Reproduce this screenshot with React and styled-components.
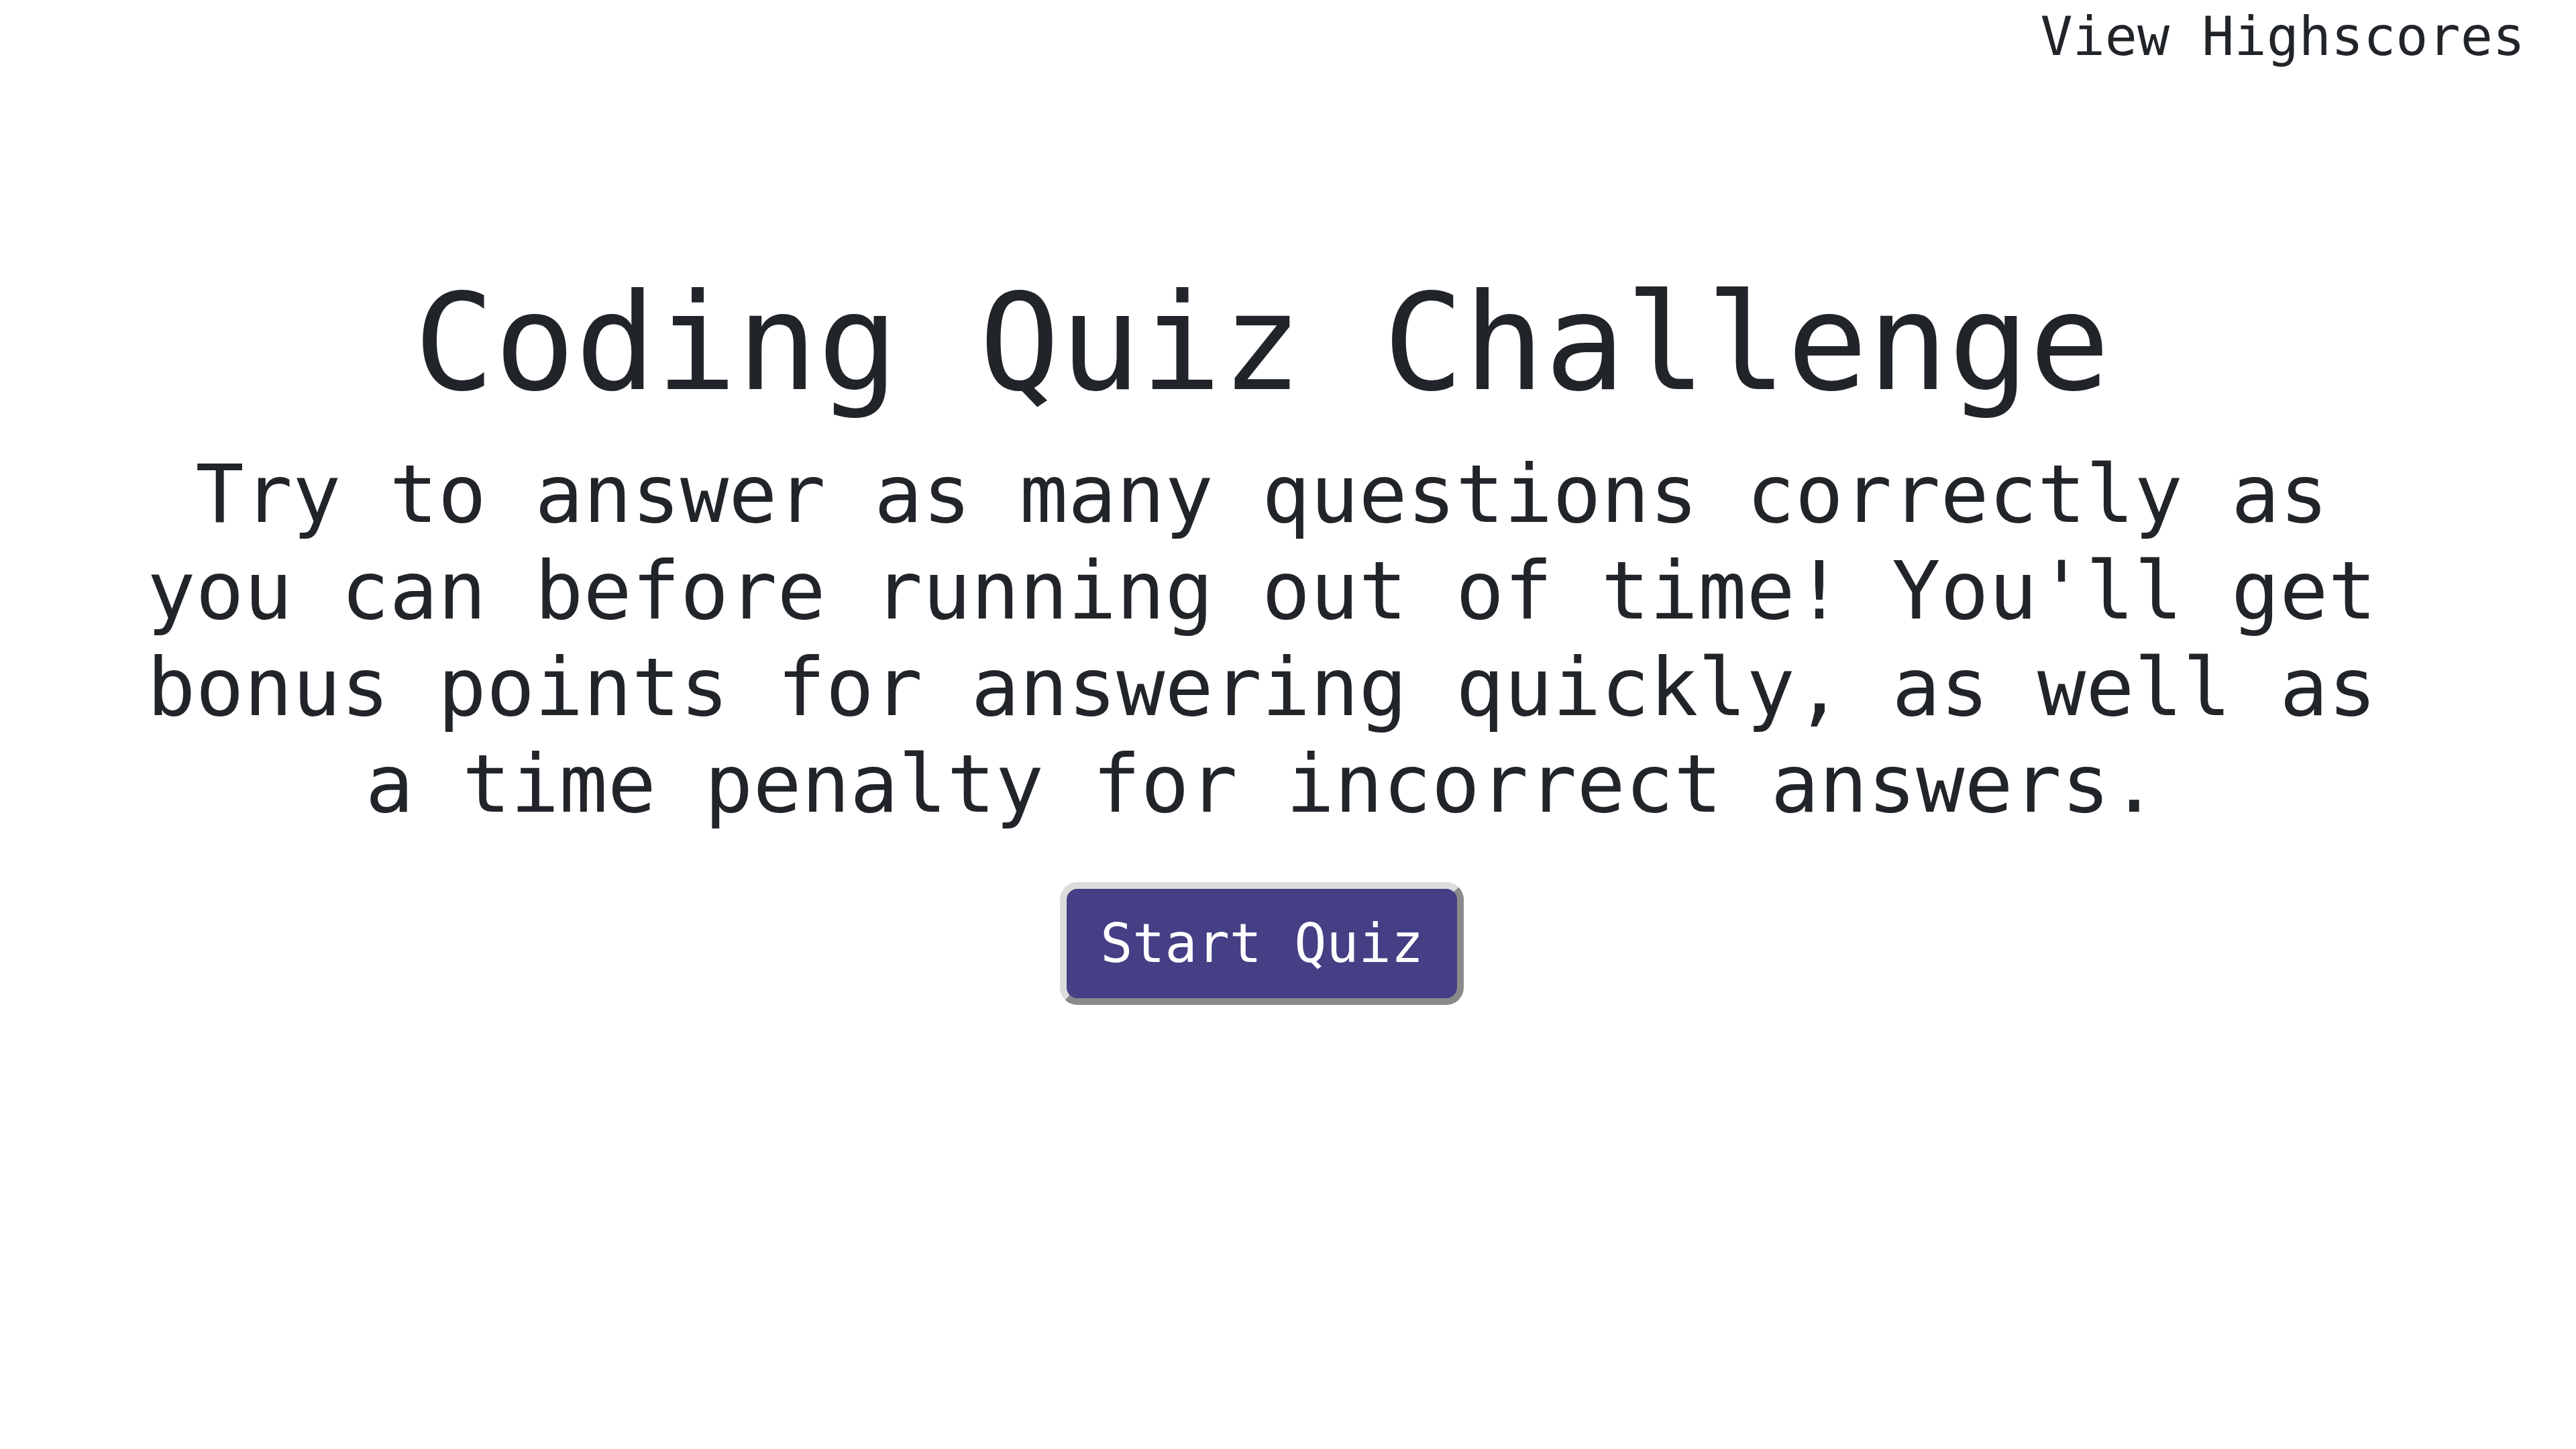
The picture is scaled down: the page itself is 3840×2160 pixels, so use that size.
import React from 'react'
import styled, { createGlobalStyle } from 'styled-components'

const GlobalStyle = createGlobalStyle`
  html, body {
    margin: 0;
    padding: 0;
    background: #ffffff;
  }
  body {
    font-family: "DejaVu Sans Mono", "Liberation Mono", monospace;
    color: #212529;
  }
`

const Page = styled.div`
  min-height: 2160px;
  display: flex;
  flex-direction: column;
`

const Header = styled.header`
  display: flex;
  justify-content: flex-end;
  padding: 8px 76px 0 0;
`

const HighscoreLink = styled.a`
  font-size: 80px;
  line-height: normal;
  color: #212529;
  text-decoration: none;
  cursor: pointer;
`

const Main = styled.main`
  display: flex;
  flex-direction: column;
  align-items: center;
  padding: 290px 78px 0 0;
`

const Title = styled.h1`
  margin: 0;
  font-size: 200px;
  font-weight: 400;
  line-height: 240px;
  text-align: center;
`

const Intro = styled.p`
  margin: 34px 0 0;
  max-width: 3380px;
  font-size: 120px;
  line-height: 144px;
  text-align: center;
`

const StartButton = styled.button`
  margin-top: 74px;
  padding: 35px 50px;
  font-family: inherit;
  font-size: 80px;
  line-height: normal;
  color: #ffffff;
  background: #453f85;
  border: 10px solid;
  border-color: #dcdcdc #8a8a8a #8a8a8a #dcdcdc;
  border-radius: 26px;
  cursor: pointer;
`

export default function App() {
  return (
    <>
      <GlobalStyle />
      <Page>
        <Header>
          <HighscoreLink>View Highscores</HighscoreLink>
        </Header>
        <Main>
          <Title>Coding Quiz Challenge</Title>
          <Intro>
            Try to answer as many questions correctly as you can before running out of time!
            You'll get bonus points for answering quickly, as well as a time penalty for
            incorrect answers.
          </Intro>
          <StartButton>Start Quiz</StartButton>
        </Main>
      </Page>
    </>
  )
}
